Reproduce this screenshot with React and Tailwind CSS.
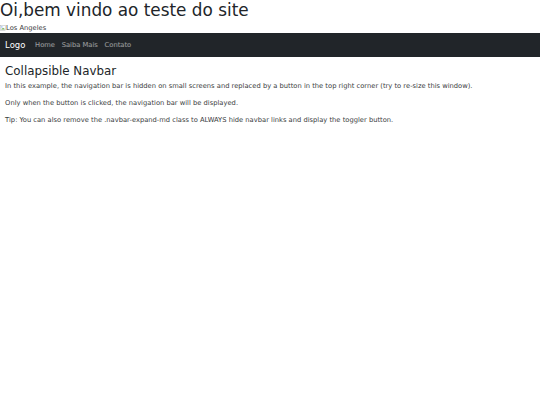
export default function App() {
  return (
    <div className="min-h-[405px] bg-white text-[#212529]" style={{ fontFamily: '"DejaVu Sans", sans-serif' }}>
      <h1 className="m-0 mb-[3.2px] text-[16.85px] font-medium leading-[1.2]">Oi,bem vindo ao teste do site</h1>
      <div className="flex h-[10px] items-center text-[6.74px] leading-[10px] text-[#3a3d40]">
        <svg width="6" height="6" viewBox="0 0 16 16" className="shrink-0">
          <rect x="1.5" y="1.5" width="13" height="13" fill="#fff" stroke="#9aa0a6" />
          <path d="M3 12 L6 8 L8 10 L10 7 L13 12 Z" fill="#6aa84f" />
          <circle cx="5" cy="5" r="1.5" fill="#4a86e8" />
        </svg>
        <span>Los Angeles</span>
      </div>
      <nav className="flex items-center bg-[#212529] px-[5.08px] py-[3.39px]">
        <span className="mr-[6.4px] py-[2.12px] text-[8.45px] leading-[12.7px] text-white">Logo</span>
        <div className="flex">
          <span className="px-[3.39px] py-[3.39px] text-[6.74px] leading-[10.2px] text-white/55">Home</span>
          <span className="px-[3.39px] py-[3.39px] text-[6.74px] leading-[10.2px] text-white/55">Saiba Mais</span>
          <span className="px-[3.39px] py-[3.39px] text-[6.74px] leading-[10.2px] text-white/55">Contato</span>
        </div>
      </nav>
      <div className="mt-[6.78px] px-[5.08px] text-[#3a3d40]">
        <h3 className="mb-[3.39px] text-[11.86px] font-medium leading-[1.2] text-[#212529]">Collapsible Navbar</h3>
        <p className="mb-[6.78px] text-[6.74px] leading-[10.2px]">In this example, the navigation bar is hidden on small screens and replaced by a button in the top right corner (try to re-size this window).</p>
        <p className="mb-[6.78px] text-[6.74px] leading-[10.2px]">Only when the button is clicked, the navigation bar will be displayed.</p>
        <p className="mb-[6.78px] text-[6.74px] leading-[10.2px]">Tip: You can also remove the .navbar-expand-md class to ALWAYS hide navbar links and display the toggler button.</p>
      </div>
    </div>
  );
}
